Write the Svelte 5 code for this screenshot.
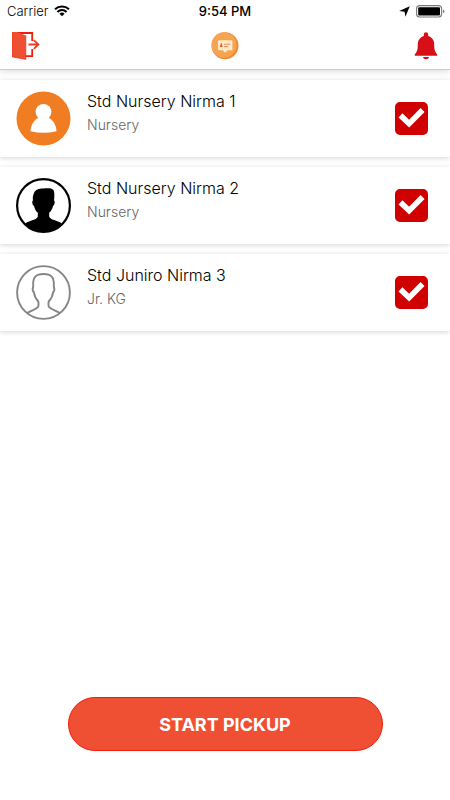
<script>
  let students = [
    { id: 1, name: 'Std Nursery Nirma 1', std: 'Nursery', avatar: 'orange', selected: true },
    { id: 2, name: 'Std Nursery Nirma 2', std: 'Nursery', avatar: 'dark', selected: true },
    { id: 3, name: 'Std Juniro Nirma 3', std: 'Jr. KG', avatar: 'outline', selected: true }
  ];

  function startPickup() {
    const ids = students.filter((s) => s.selected).map((s) => s.id);
    console.log('Start pickup:', ids);
  }
</script>

<div class="screen">
  <header>
    <div class="status">
      <div class="carrier">
        <span>Carrier</span>
        <svg width="16" height="12" viewBox="0 0 16 12" aria-hidden="true">
          <path d="M1 4.2a10.4 10.4 0 0 1 14 0M3.4 6.9a6.8 6.8 0 0 1 9.2 0" fill="none" stroke="#000" stroke-width="2" />
          <path d="M8 11.3 5.4 8.8a3.8 3.8 0 0 1 5.2 0z" />
        </svg>
      </div>
      <span class="time">9:54 PM</span>
      <div class="power">
        <svg width="11" height="11" viewBox="0 0 11 11" aria-hidden="true">
          <path d="M10.8.2 6.4 10.800 5.600 5.800.200 5z" />
        </svg>
        <svg width="29" height="13" viewBox="0 0 29 13" aria-hidden="true">
          <rect x=".6" y=".6" width="25" height="11.4" rx="3" fill="none" stroke="#777" stroke-width="1.1" />
          <rect x="2.2" y="2.2" width="21.8" height="8.2" rx="1" />
          <path d="M27 4.4q1.4.6 1.4 1.9T27 8.2z" fill="#777" />
        </svg>
      </div>
    </div>

    <nav>
      <button class="icon" aria-label="Logout">
        <svg width="28" height="28" viewBox="0 0 28 28">
          <path d="M1 1h19.2v8M20.2 17v7.200H13" fill="none" stroke="#f01c0c" stroke-width="1.8" />
          <path d="M0 0h5l8.800 3.400v24L0 24.800z" fill="#ef4f33" />
          <path d="M13.800 3.400v24L0 24.800V0" fill="none" stroke="#f22a14" stroke-width=".7" />
          <path d="M16.500 12.500h10M21.800 8.100l4.600 4.400-4.600 4.400" fill="none" stroke="#ef3d22" stroke-width="1.8" />
        </svg>
      </button>
      <button class="icon" aria-label="Messages">
        <svg width="28" height="28" viewBox="0 0 28 28">
          <circle cx="14" cy="13.700" r="13.500" fill="#f58634" />
          <ellipse cx="13" cy="13" rx="12.400" ry="12.800" fill="#f6a452" />
          <path d="M8.200 8.200h12q1.200 0 1.200 1.200v7.600q0 1.200-1.200 1.200h-3.600l-2.400 2.600-2.400-2.600H8.200q-1.200 0-1.200-1.200V9.400q0-1.200 1.200-1.200z" fill="#fdebc8" />
          <path d="M10.700 11q.8.900.4 2.100l.6 1.900H8.900l.4-1.800q.1-1.300 1.400-2.200z" fill="#ea5b2c" />
          <path d="M13 12.200h6.400M13 14.600h4" stroke="#f08a60" stroke-width="1" />
        </svg>
      </button>
      <button class="icon" aria-label="Notifications">
        <svg width="24" height="28" viewBox="0 0 24 28">
          <path d="M12 .2a2.200 2.200 0 0 1 2.200 2.200v1.600c4 1.200 6 4.400 6 8.400 0 5.300.8 7.500 3 9.800v1.500H.8v-1.500c2.200-2.300 3-4.500 3-9.800 0-4 2-7.200 6-8.400V2.400A2.200 2.200 0 0 1 12 .2z" fill="#d70f17" />
          <path d="M8.800 25h6.400q-.8 2.300-3.200 2.300T8.800 25z" fill="#d70f17" />
        </svg>
      </button>
    </nav>
  </header>

  <main>
    {#each students as student (student.id)}
      <label class="card">
        <svg class="avatar" viewBox="0 0 55 55" aria-hidden="true">
          {#if student.avatar === 'orange'}
            <circle cx="27.5" cy="27.5" r="27" fill="#f07d22" />
            <circle cx="27.5" cy="20.800" r="7.9" fill="#fff" />
            <path d="M14.500 40.300c.2-6.500 3.500-11.500 9-14.300h8c5.500 2.800 8.800 7.800 9 14.300q-13 3-26 0z" fill="#fff" />
          {:else if student.avatar === 'dark'}
            <circle cx="27.5" cy="27.5" r="26.4" fill="#fff" stroke="#000" stroke-width="2.2" />
            <path d="M18.2 14.500c1.200-2.800 4.800-4 8.800-4 4.600-.4 8.600-.6 10.500 1.500 1.100 2.500 1 6 .5 10.500 1.400.4.600 4.800-1 5.500-.6 3-1.800 5-3.800 6.800v4c2 3.600 8.800 3.800 12.800 6.700C41 51.200 34.600 54 27.500 54S14 51.200 9 45.500c4-2.900 10.800-3.100 12.800-6.700v-4c-2-1.800-3.200-3.800-3.800-6.800-1.600-.7-2.400-5.100-1-5.500-.6-3 .1-5.500 1.200-8z" />
          {:else}
            <g fill="none" stroke="#858585" stroke-width="1.9">
              <circle cx="27.5" cy="27.5" r="26.4" />
              <path d="M11 48.200c4-3 9.500-3.600 11.300-6.700.5-1.500.3-3.500 0-5-2.800-3-4-5.500-4.300-9-1.400-1.500-1.600-4-.8-6C16.500 12 20 9 27.500 9S38.500 12 37.800 21.500c.8 2 .6 4.500-.8 6-.3 3.500-1.500 6-4.300 9-.3 1.500-.5 3.500 0 5 1.800 3.100 7.300 3.700 11.300 6.700" />
            </g>
          {/if}
        </svg>
        <span class="info">
          <span class="name">{student.name}</span>
          <span class="std">{student.std}</span>
        </span>
        <span class="check">
          <input type="checkbox" bind:checked={student.selected} />
          {#if student.selected}
            <svg viewBox="0 0 33 33" aria-hidden="true">
              <path d="M7.500 15.300l6.600 6.300L25.600 10" fill="none" stroke="#fff" stroke-width="5.6" stroke-linecap="square" />
            </svg>
          {/if}
        </span>
      </label>
    {/each}
  </main>

  <footer>
    <button class="start" on:click={startPickup}>START PICKUP</button>
  </footer>
</div>

<style>
  :global(body) {
    margin: 0;
    background: #fff;
  }

  .screen {
    display: flex;
    flex-direction: column;
    min-height: 100vh;
    font-family: Inter, 'Liberation Sans', sans-serif;
    color: #000;
  }

  header {
    border-bottom: 1px solid #ccc;
    box-shadow: 0 2px 6px rgba(0, 0, 0, 0.12);
  }

  .status {
    display: grid;
    grid-template-columns: 1fr auto 1fr;
    align-items: center;
    height: 22px;
    padding: 0 5px;
    font-size: 13px;
  }

  .carrier,
  .power {
    display: flex;
    align-items: center;
    gap: 6px;
  }

  .carrier {
    padding-left: 2px;
    font-weight: 300;
  }

  .power {
    justify-content: flex-end;
  }

  .time {
    font-weight: 500;
  }

  nav {
    display: grid;
    grid-template-columns: 1fr auto 1fr;
    align-items: center;
    height: 47px;
    padding: 0 12px;
  }

  button {
    border: none;
    font-family: inherit;
    cursor: pointer;
  }

  .icon {
    display: flex;
    justify-self: start;
    padding: 0;
    background: none;
  }

  .icon:last-child {
    justify-self: end;
  }

  main {
    display: flex;
    flex: 1;
    flex-direction: column;
    gap: 10px;
    padding-top: 10px;
  }

  .card {
    display: flex;
    align-items: center;
    gap: 16px;
    height: 77px;
    padding: 0 22px 0 16px;
    box-sizing: border-box;
    background: #fff;
    box-shadow: 0 1px 5px rgba(0, 0, 0, 0.17);
  }

  .avatar {
    width: 55px;
    height: 55px;
  }

  .info {
    display: flex;
    flex: 1;
    flex-direction: column;
    align-self: flex-start;
    gap: 4px;
    padding-top: 11px;
  }

  .name {
    font-size: 16px;
    font-weight: 300;
    line-height: 20px;
  }

  .std {
    font-size: 14px;
    font-weight: 300;
    line-height: 20px;
    color: #666;
  }

  .check {
    position: relative;
    width: 33px;
    height: 33px;
  }

  .check input {
    display: block;
    width: 33px;
    height: 33px;
    margin: 0;
    appearance: none;
    border: 2px solid #d00000;
    border-radius: 5px;
    cursor: pointer;
  }

  .check input:checked {
    background: #d00000;
  }

  .check svg {
    position: absolute;
    inset: 0;
    pointer-events: none;
  }

  footer {
    display: flex;
    justify-content: center;
    padding: 24px 0 49px;
  }

  .start {
    width: 70%;
    height: 54px;
    border: 1px solid #f01c0c;
    border-radius: 27px;
    background: #ef4f33;
    color: #fff;
    font-size: 18px;
    font-weight: 700;
  }
</style>
